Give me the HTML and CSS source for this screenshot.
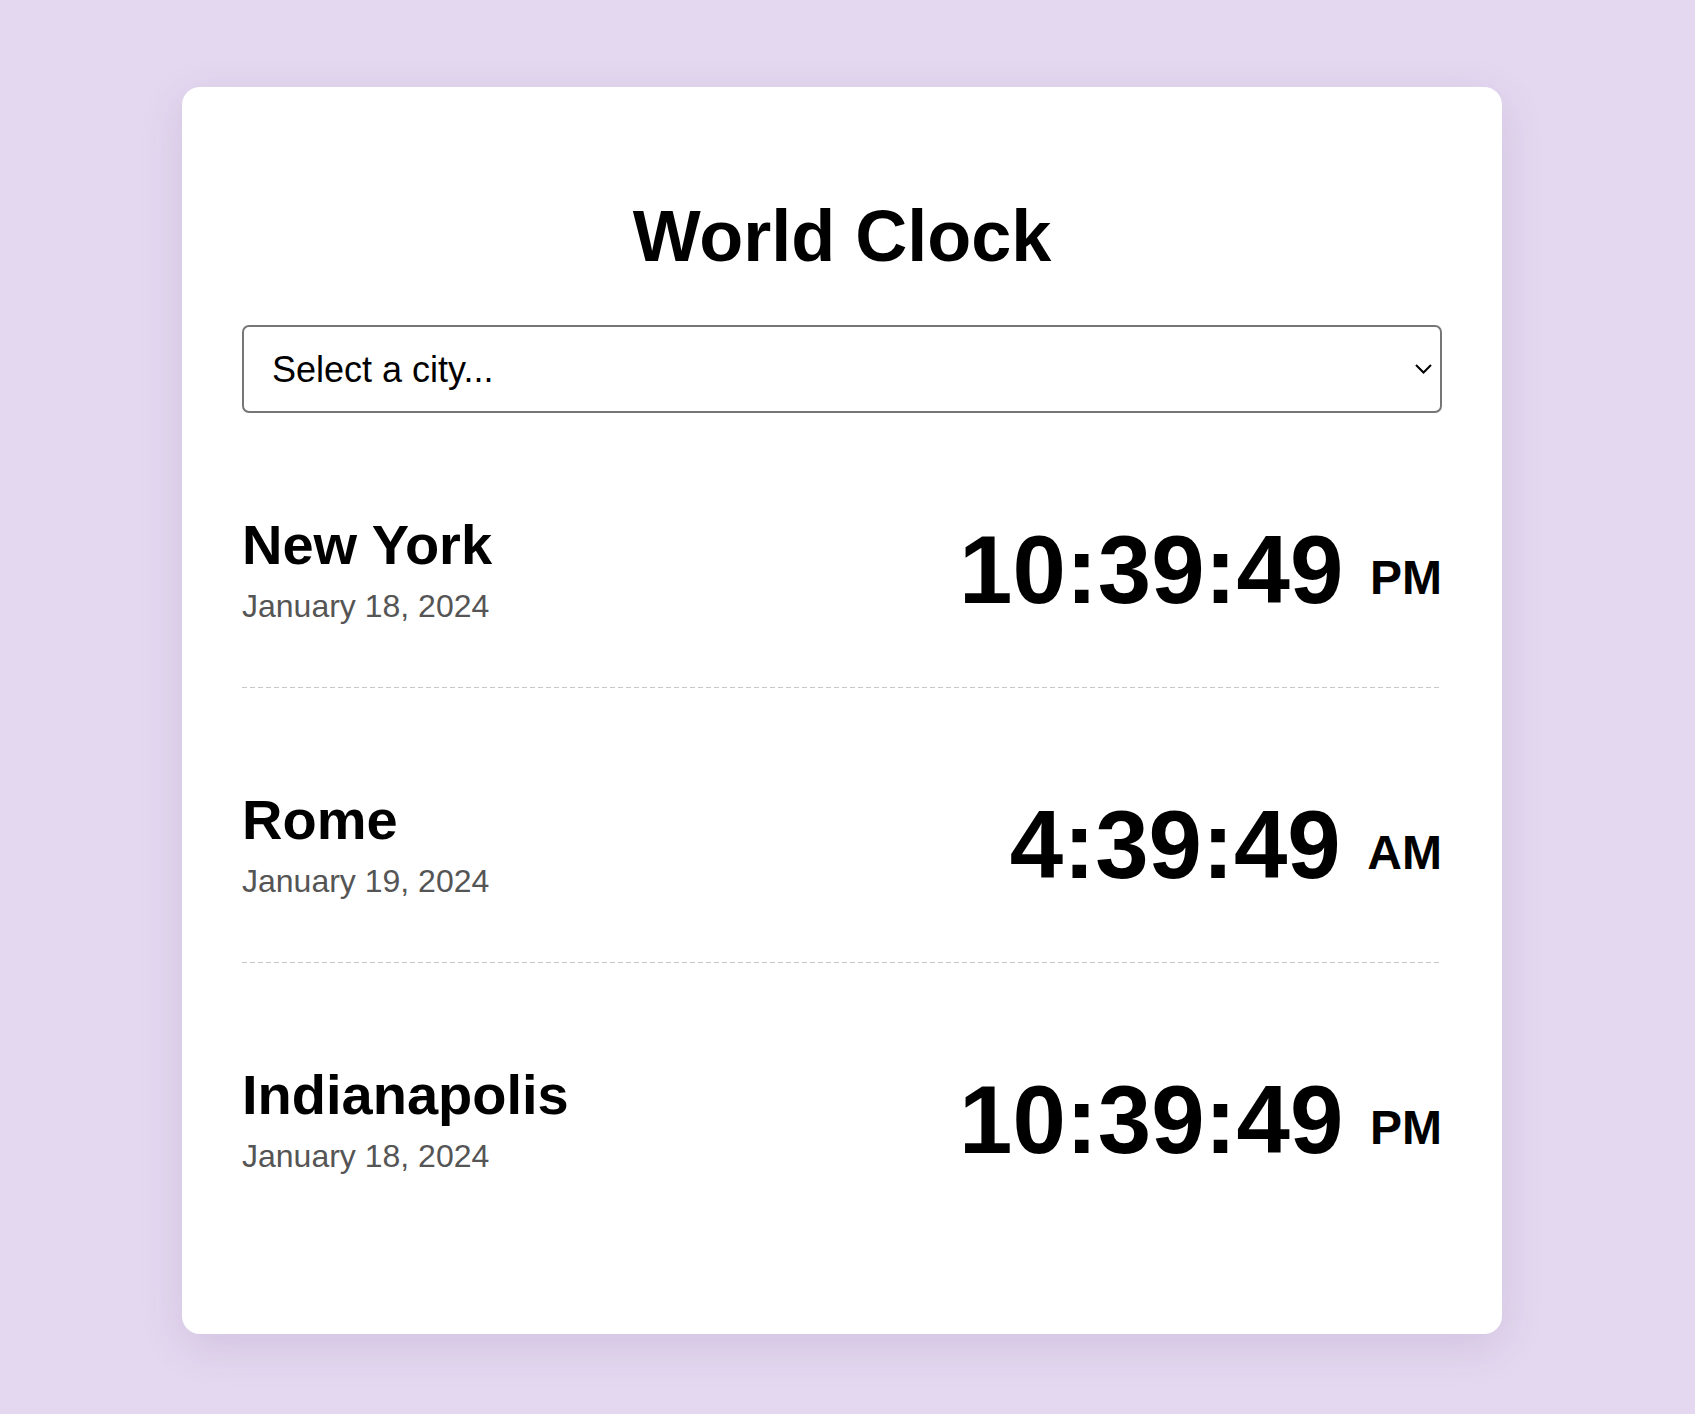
FILE: index.html
```html
<!DOCTYPE html>
<html lang="en">
<head>
    <meta charset="UTF-8">
    <meta name="viewport" content="width=device-width, initial-scale=1.0">
    <title>World Clock</title>
    <link rel="stylesheet" href="styles.css">
</head>
<body>
    <div class="container">
        <h1>World Clock</h1>

        <div class="select-wrap">
            <select id="citySelect" class="city-select">
                <option value="">Select a city...</option>
                <option value="current">My current location</option>
                <option value="America/New_York">New York</option>
                <option value="Europe/Rome">Rome</option>
                <option value="America/Indiana/Indianapolis">Indianapolis</option>
                <option value="Asia/Tokyo">Tokyo</option>
                <option value="Australia/Sydney">Sydney</option>
            </select>
            <svg class="chevron" width="17" height="10" viewBox="0 0 17 10">
                <polyline points="1,1 8.5,8.5 16,1" fill="none" stroke="#000000" stroke-width="2"/>
            </svg>
        </div>

        <div class="cities" id="cities">
            <div class="city">
                <div class="city-info">
                    <h2>New York</h2>
                    <div class="date">January 18, 2024</div>
                </div>
                <div class="time">10:39:49 <small>PM</small></div>
            </div>

            <div class="city">
                <div class="city-info">
                    <h2>Rome</h2>
                    <div class="date">January 19, 2024</div>
                </div>
                <div class="time">4:39:49 <small>AM</small></div>
            </div>

            <div class="city">
                <div class="city-info">
                    <h2>Indianapolis</h2>
                    <div class="date">January 18, 2024</div>
                </div>
                <div class="time">10:39:49 <small>PM</small></div>
            </div>
        </div>
    </div>
</body>
</html>
```

FILE: styles.css
```css
* {
    box-sizing: border-box;
}

body {
    margin: 0;
    padding: 87px 11px 81px 0;
    font-family: 'Liberation Sans', Arial, sans-serif;
    background: #e4d8f0;
    display: flex;
    justify-content: center;
    align-items: flex-start;
    min-height: 100vh;
}

.container {
    width: 1320px;
    background: #ffffff;
    border-radius: 18px;
    padding: 60px;
    box-shadow: 0 12px 45px rgba(70, 40, 110, 0.12);
}

h1 {
    font-size: 72px;
    font-weight: 700;
    text-align: center;
    color: #000000;
    margin: 0.67em 0;
}

.select-wrap {
    position: relative;
    margin-bottom: 40px;
}

.city-select {
    -webkit-appearance: none;
    appearance: none;
    display: block;
    width: 100%;
    height: 88px;
    padding: 0 50px 0 28px;
    font-family: 'Liberation Sans', Arial, sans-serif;
    font-size: 36px;
    color: #000000;
    background: #ffffff;
    border: 2px solid #767676;
    border-radius: 7px;
    outline: none;
}

.chevron {
    position: absolute;
    right: 10px;
    top: 39px;
    pointer-events: none;
}

.city {
    display: flex;
    justify-content: space-between;
    align-items: center;
    padding: 62px 0 63px;
    margin-bottom: 40px;
    background: repeating-linear-gradient(to right, #c8c8c8 0 5px, transparent 5px 8px) bottom left / 100% 1px no-repeat;
}

.city:last-child {
    background: none;
    margin-bottom: 36px;
}

.city h2 {
    margin: 0 0 14px;
    font-size: 56px;
    line-height: 58px;
    font-weight: 700;
    color: #000000;
}

.date {
    font-size: 32px;
    color: #555555;
}

.time {
    font-size: 96px;
    font-weight: 700;
    color: #000000;
}

.time small {
    font-size: 48px;
    vertical-align: middle;
}
```
